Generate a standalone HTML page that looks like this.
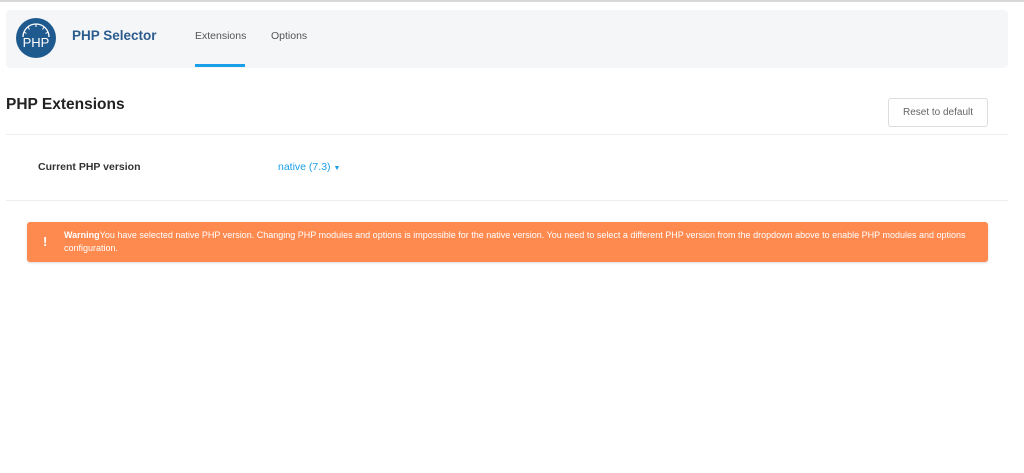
<!DOCTYPE html>
<html><head><meta charset="utf-8"><style>
body{margin:0;width:1024px;height:473px;background:#fff;font-family:"Liberation Sans",sans-serif;position:relative;overflow:hidden}
.a{position:absolute}
</style></head><body>
<div class="a" style="left:0;top:0;width:1024px;height:2px;background:#d8d8d8"></div>
<div class="a" style="left:6px;top:10px;width:1002px;height:58px;background:#f5f6f8;border-radius:4px"></div>
<svg class="a" style="left:16px;top:18px" width="40" height="40" viewBox="0 0 40 40">
<circle cx="20" cy="20" r="20" fill="#1f5a8e"/>
<path d="M7 19 A13 13 0 0 1 33 19" fill="none" stroke="#fff" stroke-width="1.3"/>
<g stroke="#fff" stroke-width="1"><line x1="20" y1="6" x2="20" y2="9"/><line x1="12" y1="9" x2="13.5" y2="11.5"/><line x1="28" y1="9" x2="26.5" y2="11.5"/><line x1="8" y1="14" x2="10.5" y2="15.5"/><line x1="32" y1="14" x2="29.5" y2="15.5"/></g>
<text x="20" y="29" text-anchor="middle" font-family="Liberation Sans" font-size="13" fill="#fff">PHP</text>
</svg>
<div class="a" style="left:72px;top:28px;font-size:13.5px;font-weight:bold;color:#2b5c8d">PHP Selector</div>
<div class="a" style="left:195px;top:30px;font-size:10.5px;color:#555">Extensions</div>
<div class="a" style="left:271px;top:30px;font-size:10.5px;color:#555">Options</div>
<div class="a" style="left:195px;top:64px;width:50px;height:3px;background:#1aa0e8"></div>
<div class="a" style="left:6px;top:96px;font-size:15.5px;font-weight:bold;color:#222">PHP Extensions</div>
<div class="a" style="left:888px;top:98px;width:98px;height:27px;border:1px solid #ddd;border-radius:3px;font-size:10px;color:#666;text-align:center;line-height:27px">Reset to default</div>
<div class="a" style="left:6px;top:134px;width:1002px;height:1px;background:#eee"></div>
<div class="a" style="left:38px;top:161px;font-size:10.5px;font-weight:bold;color:#333">Current PHP version</div>
<div class="a" style="left:278px;top:161px;font-size:10.5px;color:#1a9ee6">native (7.3) <span style="font-size:7px">▼</span></div>
<div class="a" style="left:6px;top:200px;width:1002px;height:1px;background:#eee"></div>
<div class="a" style="left:27px;top:222px;width:961px;height:40px;background:#ff8a50;border-radius:3px;box-shadow:0 1px 2px rgba(0,0,0,.15)"></div>
<div class="a" style="left:43px;top:234px;font-size:13px;font-weight:bold;color:#fff">!</div>
<div class="a" style="left:64px;top:229px;width:915px;font-size:9px;line-height:13px;color:#fff;white-space:nowrap"><b>Warning</b>You have selected native PHP version. Changing PHP modules and options is impossible for the native version. You need to select a different PHP version from the dropdown above to enable PHP modules and options<br>configuration.</div>
</body></html>
